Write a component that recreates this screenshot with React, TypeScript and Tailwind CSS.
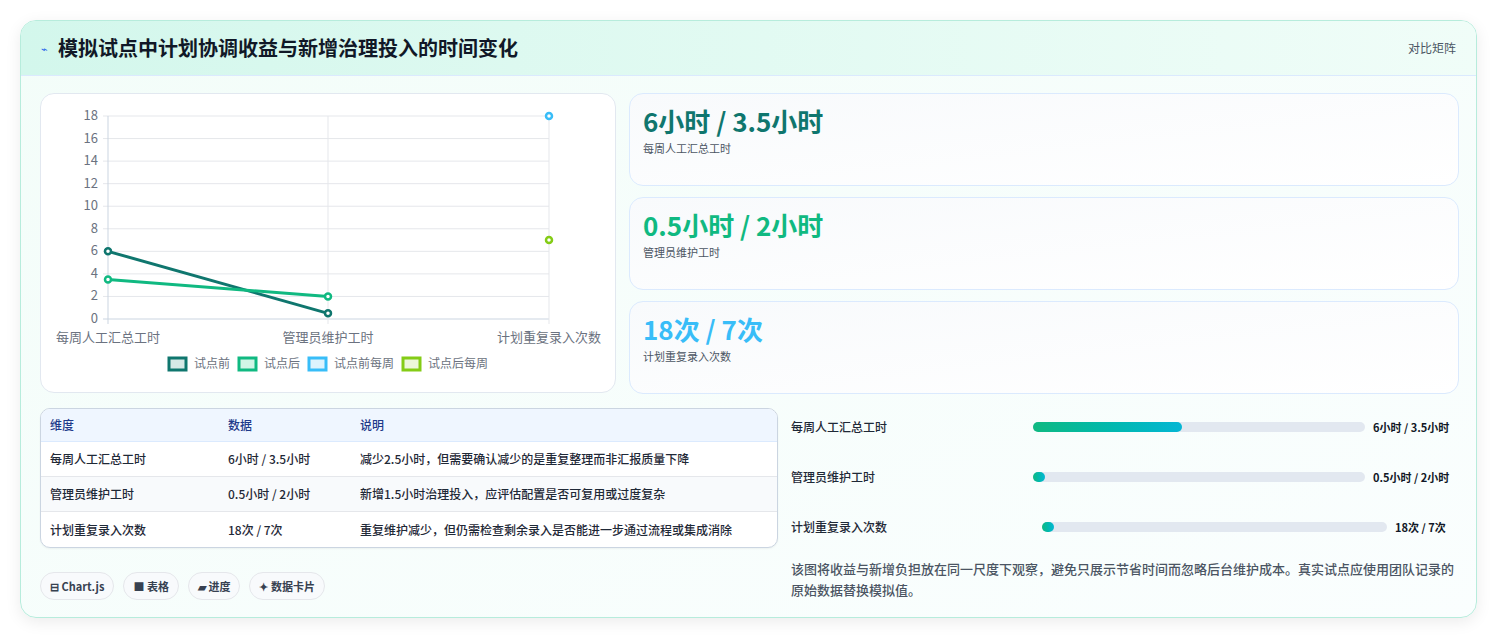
import React from "react";

const F = { fontFamily: '"Noto Sans CJK SC", "Noto Sans", sans-serif' };

function Chart() {
  const x0 = 67, x1 = 287, x2 = 508;
  const y = (v: number) => 225 - v * (203 / 18);
  const ticks = [0, 2, 4, 6, 8, 10, 12, 14, 16, 18];
  return (
    <svg width="575" height="299" viewBox="0 0 575 299" style={F}>
      {ticks.map((t) => (
        <g key={t}>
          <line x1={x0 - 5} x2={x2} y1={y(t)} y2={y(t)} stroke={t === 0 ? "#cbd5e1" : "#e5e7eb"} strokeWidth="1" />
          <text x={x0 - 10} y={y(t) + 4} textAnchor="end" fontSize="13" fill="#6b7280">{t}</text>
        </g>
      ))}
      {[x0, x1, x2].map((x, i) => (
        <line key={i} x1={x} x2={x} y1={y(18)} y2={y(0) + 5} stroke={i === 0 ? "#cbd5e1" : "#e5e7eb"} />
      ))}
      {[["每周人工汇总工时", x0], ["管理员维护工时", x1], ["计划重复录入次数", x2]].map(([l, x]) => (
        <text key={l as string} x={x as number} y={248} textAnchor="middle" fontSize="13" fill="#6b7280">{l}</text>
      ))}
      <polyline points={`${x0},${y(6)} ${x1},${y(0.5)}`} fill="none" stroke="#0f766e" strokeWidth="3" />
      <polyline points={`${x0},${y(3.5)} ${x1},${y(2)}`} fill="none" stroke="#10b981" strokeWidth="3" />
      {[
        [x0, 6, "#0f766e"], [x1, 0.5, "#0f766e"], [x0, 3.5, "#10b981"], [x1, 2, "#10b981"],
        [x2, 18, "#38bdf8"], [x2, 7, "#84cc16"],
      ].map(([x, v, c], i) => (
        <circle key={i} cx={x as number} cy={y(v as number)} r="3" fill="#fff" stroke={c as string} strokeWidth="2.5" />
      ))}
      {[
        [128, "试点前", "#0f766e", "#d6e9e6"], [198, "试点后", "#10b981", "#d1f5e6"],
        [268, "试点前每周", "#38bdf8", "#ddf3fd"], [362, "试点后每周", "#84cc16", "#ecf7da"],
      ].map(([x, l, c, f]) => (
        <g key={l as string}>
          <rect x={x as number} y={264} width="17" height="12" fill={f as string} stroke={c as string} strokeWidth="3" />
          <text x={(x as number) + 25} y={274} fontSize="12" fill="#6b7280">{l}</text>
        </g>
      ))}
    </svg>
  );
}

const stats = [
  ["6小时 / 3.5小时", "每周人工汇总工时", "text-[#0f766e]"],
  ["0.5小时 / 2小时", "管理员维护工时", "text-[#10b981]"],
  ["18次 / 7次", "计划重复录入次数", "text-[#38bdf8]"],
];
const rows = [
  ["每周人工汇总工时", "6小时 / 3.5小时", "减少2.5小时，但需要确认减少的是重复整理而非汇报质量下降"],
  ["管理员维护工时", "0.5小时 / 2小时", "新增1.5小时治理投入，应评估配置是否可复用或过度复杂"],
  ["计划重复录入次数", "18次 / 7次", "重复维护减少，但仍需检查剩余录入是否能进一步通过流程或集成消除"],
];
const bars: [string, string, string][] = [
  ["每周人工汇总工时", "6小时 / 3.5小时", "45%"],
  ["管理员维护工时", "0.5小时 / 2小时", "12px"],
  ["计划重复录入次数", "18次 / 7次", "12px"],
];

export default function App() {
  return (
    <div className="w-[1498px] h-[638px] bg-white p-5 pr-[21px]" style={F}>
      <div className="h-[598px] rounded-2xl border border-[#b7ecdc] bg-gradient-to-br from-[#f3fdf9] to-[#fafefe] shadow-[0_4px_16px_rgba(0,0,0,0.08)] overflow-hidden">
        <div className="h-[55px] flex items-center justify-between px-5 bg-gradient-to-r from-[#d3f7ec] to-[#f0fdf8] border-b border-[#dbeafe]">
          <div className="flex items-center gap-2.5">
            <span className="text-[#2563eb] text-[11px]">⌁</span>
            <span className="text-[20px] font-bold text-[#111827]">模拟试点中计划协调收益与新增治理投入的时间变化</span>
          </div>
          <span className="text-[12px] text-[#4b5563]">对比矩阵</span>
        </div>
        <div className="pl-[19px] pr-[17px] pt-[17px]">
          <div className="flex gap-[13px]">
            <div className="w-[576px] h-[300px] rounded-[14px] border border-[#e2e8f0] bg-white">
              <Chart />
            </div>
            <div className="flex-1 flex flex-col gap-[11px]">
              {stats.map(([v, l, c]) => (
                <div key={l} className="h-[93px] rounded-[14px] border border-[#dbeafe] bg-gradient-to-br from-[#f8fafc] to-white px-[13px] pt-[10px]">
                  <div className={`text-[26px] font-bold leading-[34px] ${c}`}>{v}</div>
                  <div className="text-[11px] text-[#4b5563] mt-0.5">{l}</div>
                </div>
              ))}
            </div>
          </div>
          <div className="flex gap-[13px] mt-[14px]">
            <div className="w-[738px]">
              <div className="rounded-[10px] border border-[#cbd5e1] overflow-hidden bg-white text-[12px] font-medium shadow-[0_1px_2px_rgba(0,0,0,0.05)]">
                <div className="flex h-[33px] items-center bg-[#eff6ff] text-[#1e3a8a] border-b border-[#dbeafe]">
                  <div className="w-[187px] pl-[9px]">维度</div>
                  <div className="w-[132px]">数据</div>
                  <div>说明</div>
                </div>
                {rows.map((r, i) => (
                  <div key={i} className={`flex h-[35px] items-center text-[#1f2937] ${i < 2 ? "border-b border-[#e5e7eb]" : ""} ${i === 1 ? "bg-[#f8fafc]" : ""}`}>
                    <div className="w-[187px] pl-[9px]">{r[0]}</div>
                    <div className="w-[132px]">{r[1]}</div>
                    <div>{r[2]}</div>
                  </div>
                ))}
              </div>
              <div className="flex gap-[9px] mt-[24px]">
                {["⊟ Chart.js", "■ 表格", "▰ 进度", "✦ 数据卡片"].map((p) => (
                  <span key={p} className="h-[28px] px-[9px] flex items-center rounded-full border border-[#e5e7eb] bg-[#f8fafc] text-[11px] font-bold text-[#374151]">{p}</span>
                ))}
              </div>
            </div>
            <div className="flex-1 pt-[8px]">
              {bars.map(([l, v, w], i) => (
                <div key={l} className={`flex items-center h-[22px] ${i > 0 ? "mt-[28px]" : ""}`}>
                  <div className={`${i === 2 ? "w-[251px]" : "w-[242px]"} text-[12px] font-medium text-[#1f2937]`}>{l}</div>
                  <div className="flex-1 h-[10px] rounded-full bg-[#e2e8f0]">
                    <div className="h-full rounded-full bg-gradient-to-r from-[#10b981] to-[#06b6d4]" style={{ width: w }} />
                  </div>
                  <div className={`${i === 2 ? "w-[72px]" : "w-[94px]"} pl-[8px] text-[11px] font-bold text-[#111827] text-left`}>{v}</div>
                </div>
              ))}
              <p className="mt-[20px] text-[13px] leading-[21px] font-medium text-[#4b5563]">
                该图将收益与新增负担放在同一尺度下观察，避免只展示节省时间而忽略后台维护成本。真实试点应使用团队记录的原始数据替换模拟值。
              </p>
            </div>
          </div>
        </div>
      </div>
    </div>
  );
}
